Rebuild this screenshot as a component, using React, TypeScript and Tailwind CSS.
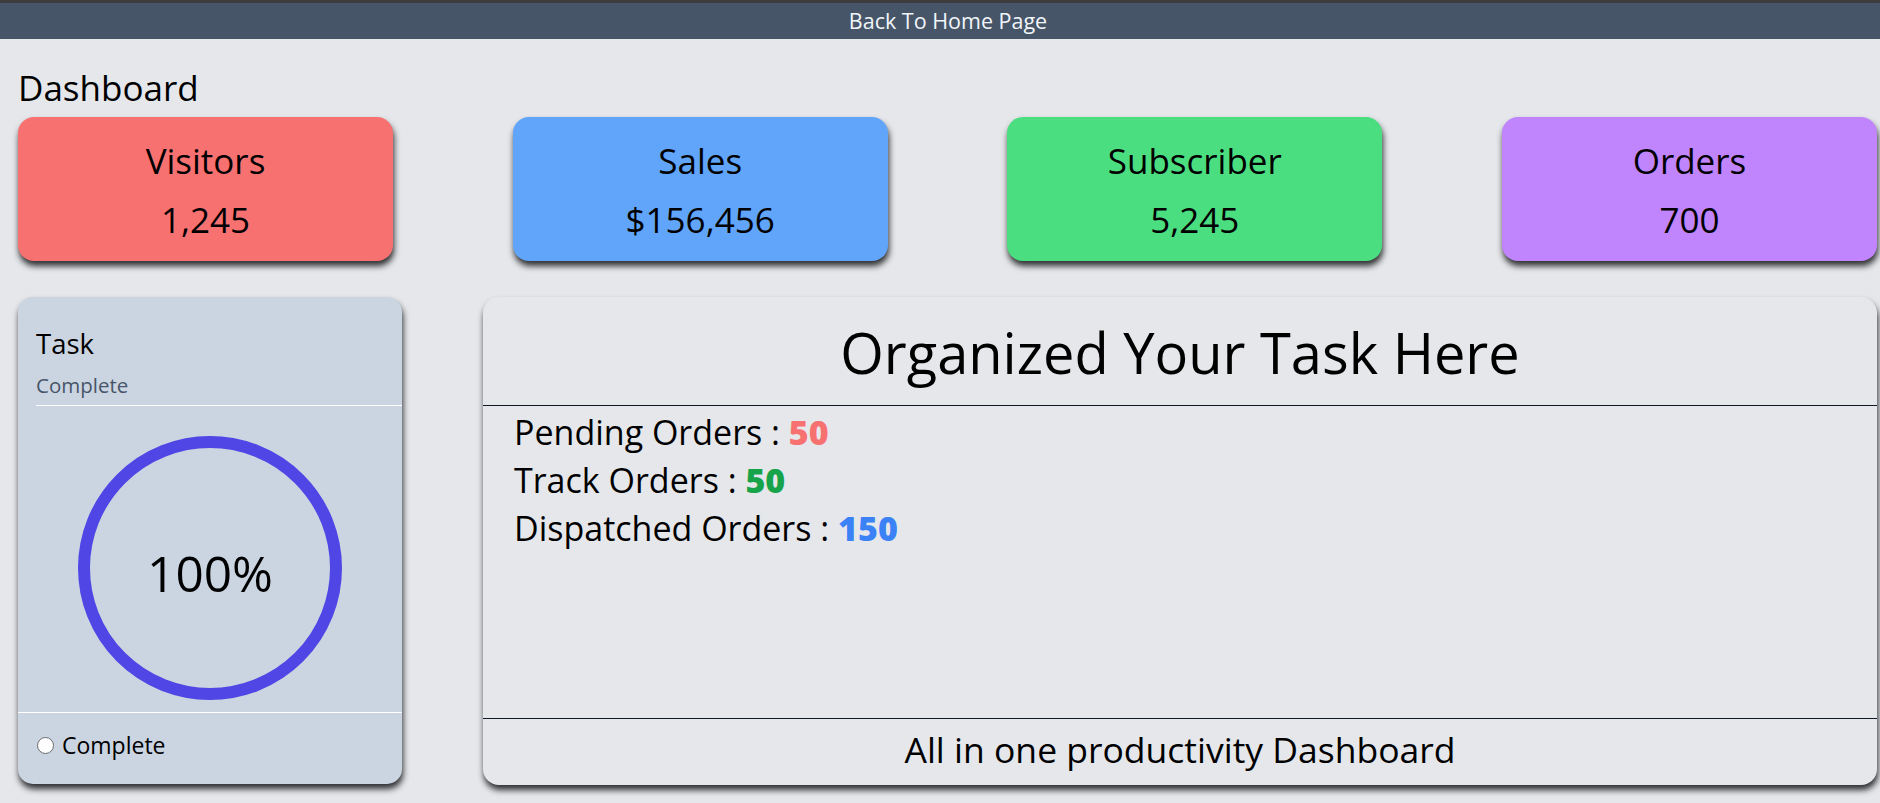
import React from "react";

const font = { fontFamily: '"Open Sans", "Noto Sans", sans-serif' };

function StatCard({ title, value, bg }: { title: string; value: string; bg: string }) {
  return (
    <div
      className={`w-[375px] h-[144px] rounded-[16px] ${bg} shadow-[1px_5px_6px_0px_rgba(0,0,0,0.8)] flex flex-col items-center pt-[24px] gap-[19px] text-black`}
    >
      <div className="text-[35px] leading-[40px]">{title}</div>
      <div className="text-[35px] leading-[40px]">{value}</div>
    </div>
  );
}

export default function App() {
  return (
    <div className="min-h-[803px] bg-[#e5e7eb] text-black" style={font}>
      <div className="h-[3px] bg-[#3d3d3d]" />
      <div className="h-[36px] bg-[#475569] flex items-center justify-center pl-[16px]">
        <span className="text-[21.5px] leading-[28px] text-[#f1f5f9]">Back To Home Page</span>
      </div>

      <div className="pl-[18px] pr-[3px]">
        <div className="pt-[29px] h-[78px]">
          <h1 className="text-[35px] leading-[40px]">Dashboard</h1>
        </div>

        <div className="flex justify-between">
          <StatCard title="Visitors" value="1,245" bg="bg-[#f87171]" />
          <StatCard title="Sales" value="$156,456" bg="bg-[#60a5fa]" />
          <StatCard title="Subscriber" value="5,245" bg="bg-[#4ade80]" />
          <StatCard title="Orders" value="700" bg="bg-[#c084fc]" />
        </div>

        <div className="flex justify-between mt-[36px]">
          {/* Task card */}
          <div className="w-[384px] h-[487px] rounded-[15px] bg-[#cbd5e1] shadow-[1px_5px_6px_0px_rgba(0,0,0,0.8)] flex flex-col">
            <div className="ml-[18px] pt-[29px] pb-[6px] border-b border-white">
              <div className="text-[27.5px] leading-[36px]">Task</div>
              <div className="mt-[9px] text-[20.5px] leading-[28px] text-[#475569]">Complete</div>
            </div>
            <div className="h-[306px] flex justify-center pt-[30px]">
              <div className="relative w-[264px] h-[264px]">
                <svg width="264" height="264" viewBox="0 0 264 264" className="absolute inset-0">
                  <circle cx="132" cy="132" r="126" fill="none" stroke="#4f46e5" strokeWidth="12" />
                </svg>
                <div className="absolute inset-0 flex items-center justify-center pt-[10px]">
                  <span className="text-[49.5px] leading-[56px]">100%</span>
                </div>
              </div>
            </div>
            <div className="border-t border-white flex items-center pl-[19px] pt-[18px]">
              <span className="w-[17px] h-[17px] rounded-full bg-white border border-[#6b6b6b] shrink-0" />
              <span className="ml-[8px] text-[23px] leading-[28px]">Complete</span>
            </div>
          </div>

          {/* Right panel */}
          <div className="w-[1394px] h-[488px] rounded-[16px] bg-[#e5e7eb] shadow-[1px_5px_6px_0px_rgba(0,0,0,0.8)] flex flex-col">
            <div className="pt-[27px] h-[109px] border-b border-[#111827] text-center">
              <div className="text-[56px] leading-[56px]">Organized Your Task Here</div>
            </div>
            <div className="flex-1 pl-[31px] pt-[2px] text-[34px] leading-[48px]">
              <div>
                Pending Orders : <span className="font-extrabold text-[#f87171]">50</span>
              </div>
              <div>
                Track Orders : <span className="font-extrabold text-[#16a34a]">50</span>
              </div>
              <div>
                Dispatched Orders : <span className="font-extrabold text-[#3b82f6]">150</span>
              </div>
            </div>
            <div className="h-[67px] border-t border-[#111827] pt-[10px] text-center">
              <div className="text-[35.5px] leading-[40px]">All in one productivity Dashboard</div>
            </div>
          </div>
        </div>
      </div>
    </div>
  );
}
